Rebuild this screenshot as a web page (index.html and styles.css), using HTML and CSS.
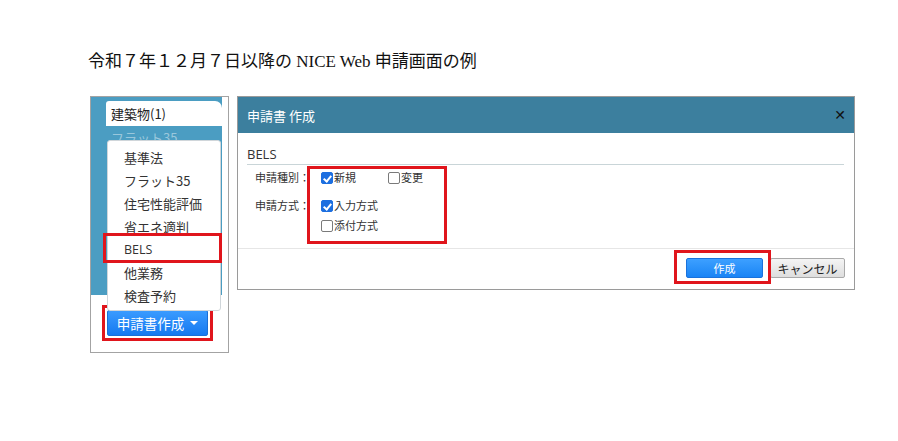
FILE: index.html
```html
<!DOCTYPE html>
<html lang="ja">
<head>
<meta charset="utf-8">
<link rel="stylesheet" href="styles.css">
</head>
<body>
<div class="page">
  <p class="title">令和７年１２月７日以降の NICE Web 申請画面の例</p>
  <div class="row">
    <div class="side">
      <div class="side-blue">
        <div class="tab">建築物(1)</div>
        <div class="faded">フラット35</div>
      </div>
      <div class="btn-wrap"><button class="btn-create">申請書作成<span class="caret"></span></button></div>
      <ul class="menu">
        <li>基準法</li>
        <li>フラット35</li>
        <li>住宅性能評価</li>
        <li>省エネ適判</li>
        <li class="bels">BELS</li>
        <li>他業務</li>
        <li>検査予約</li>
      </ul>
      <div class="mark mark-bels"></div>
    </div>
    <div class="dialog">
      <div class="dlg-head">
        <span>申請書 作成</span>
        <span class="close">✕</span>
      </div>
      <div class="dlg-body">
        <div class="section">BELS</div>
        <div class="form">
          <div class="flabel">申請種別：</div>
          <div class="opts opts-row">
            <label class="opt w67"><span class="cb on"></span>新規</label>
            <label class="opt"><span class="cb"></span>変更</label>
          </div>
          <div class="flabel">申請方式：</div>
          <div class="opts opts-col">
            <label class="opt"><span class="cb on"></span>入力方式</label>
            <label class="opt"><span class="cb"></span>添付方式</label>
          </div>
        </div>
      </div>
      <div class="dlg-foot">
        <button class="b-ok">作成</button>
        <button class="b-cancel">キャンセル</button>
      </div>
      <div class="mark mark-opts"></div>
      <div class="mark mark-ok"></div>
    </div>
  </div>
</div>
</body>
</html>
```
FILE: styles.css
```css
* { box-sizing: border-box; }
body { margin: 0; background: #fff; }
.page { padding: 52px 0 0 88px; }
.title {
  margin: 0;
  font-family: "Liberation Serif", "Noto Sans CJK JP", serif;
  font-size: 17px;
  line-height: 20px;
  color: #111;
}
.row { display: flex; gap: 8px; margin: 24px 0 0 2px; align-items: flex-start; }

.side {
  position: relative;
  width: 139px;
  height: 257px;
  border: 1px solid #a3a3a3;
  font-family: "Noto Sans CJK JP", "Open Sans", sans-serif;
}
.side-blue {
  width: 131px;
  height: 198px;
  background: #4b9dc2;
  padding-top: 4px;
  overflow: hidden;
}
.tab {
  margin-left: 15px;
  width: 116px;
  height: 25px;
  background: #fff;
  border-radius: 3px 7px 0 0;
  font-size: 13px;
  line-height: 25px;
  padding-left: 5px;
  color: #222;
}
.faded {
  margin: 3px 0 0 20px;
  font-size: 13px;
  line-height: 18px;
  color: rgba(255,255,255,0.45);
}
.menu {
  position: absolute;
  left: 16px;
  top: 43px;
  width: 114px;
  height: 171px;
  margin: 0;
  padding: 5px 0 0 0;
  list-style: none;
  background: #fff;
  border: 1px solid #d0d6da;
  border-radius: 3px;
}
.menu li {
  padding-left: 16px;
  font-size: 13px;
  line-height: 23px;
  height: 23px;
  color: #333;
}
.menu li.bels { font-family: "Open Sans", sans-serif; font-size: 12.5px; }
.btn-wrap {
  display: inline-block;
  margin: 10px 0 0 11px;
  border: 3px solid #e0151c;
  padding: 2px;
}
.btn-create {
  display: flex;
  align-items: center;
  justify-content: center;
  gap: 6px;
  width: 101px;
  height: 26px;
  border: 1px solid #1a6fd6;
  border-radius: 2px;
  background: linear-gradient(#3a9bff, #1579f0);
  color: #fff;
  font-family: "Noto Sans CJK JP", sans-serif;
  font-size: 13.5px;
  padding: 0;
}
.caret {
  width: 0; height: 0;
  border-left: 4px solid transparent;
  border-right: 4px solid transparent;
  border-top: 4px solid #fff;
}
.mark { position: absolute; border: 3px solid #e0151c; }
.mark-bels { left: 12px; top: 136px; width: 119px; height: 30px; }

.dialog {
  position: relative;
  width: 618px;
  height: 194px;
  border: 1px solid #9a9a9a;
  display: flex;
  flex-direction: column;
  font-family: "Noto Sans CJK JP", "Open Sans", sans-serif;
}
.dlg-head {
  height: 36px;
  background: #3c7f9e;
  color: #fff;
  font-size: 13px;
  display: flex;
  align-items: center;
  justify-content: space-between;
  padding: 0 8px 0 9px;
}
.close { color: #111; font-weight: bold; font-size: 14px; font-family: "DejaVu Sans", sans-serif; }
.dlg-body { flex: 1; padding: 12px 10px 0 9px; }
.section {
  font-family: "Open Sans", sans-serif;
  font-size: 13px;
  line-height: 19px;
  color: #333;
  border-bottom: 1px solid #c9d5d8;
}
.form {
  display: grid;
  grid-template-columns: 66px auto;
  row-gap: 15px;
  margin: 6px 0 0 8px;
  font-size: 11px;
  color: #333;
}
.flabel { line-height: 13px; }
.opts { display: flex; }
.opts-col { flex-direction: column; gap: 7px; }
.opt { display: flex; align-items: center; line-height: 13px; }
.w67 { width: 67px; }
.cb {
  width: 12px; height: 12px;
  border: 1px solid #7a7a7a;
  border-radius: 2px;
  background: #fff;
  margin-right: 1px;
  position: relative;
}
.cb.on { background: #1d6fe0; border-color: #1d6fe0; }
.cb.on::after {
  content: "";
  position: absolute;
  left: 3px; top: 1px;
  width: 3px; height: 6px;
  border-right: 2px solid #fff;
  border-bottom: 2px solid #fff;
  transform: rotate(40deg);
}
.dlg-foot {
  height: 41px;
  border-top: 1px solid #e6e6e6;
  display: flex;
  justify-content: flex-end;
  align-items: flex-start;
  gap: 7px;
  padding: 9px 9px 0 0;
}
.dlg-foot button {
  height: 20px;
  font-family: "Noto Sans CJK JP", sans-serif;
  padding: 0;
  border-radius: 2px;
}
.b-ok {
  width: 77px;
  border: 1px solid #1a72dc;
  background: linear-gradient(#3da0ff, #1a84f5);
  color: #fff;
  font-size: 11px;
}
.b-cancel {
  width: 75px;
  border: 1px solid #a9a9a9;
  background: linear-gradient(#f4f4f4, #dedede);
  color: #222;
  font-size: 12px;
}
.mark-opts { left: 69px; top: 69px; width: 140px; height: 78px; }
.mark-ok { left: 436px; top: 153px; width: 97px; height: 34px; }
```
